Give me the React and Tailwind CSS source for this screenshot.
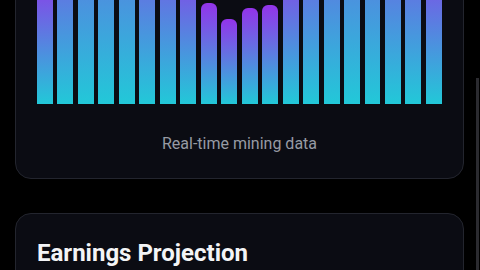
import React from 'react'

// heights in px, chart area is 300px tall
const bars = [133, 207, 280, 296, 296, 207, 188, 150, 100.5, 84.5, 95.5, 98.5, 150, 207, 252, 296, 280, 225, 207, 162]

function MiningChart() {
  return (
    <div className="rounded-2xl border border-[#23252e] bg-[#0b0c13] px-[21px] pt-[24px] pb-[24px]">
      <div className="flex h-[300px] items-end gap-[4.5px]">
        {bars.map((h, i) => (
          <div
            key={i}
            className="flex-1 rounded-t-md bg-[linear-gradient(to_bottom,#9333ea,#22c8d8)]"
            style={{ height: h }}
          />
        ))}
      </div>
      <p className="mt-[30px] text-center text-base leading-[20px] text-[#979ba4]">
        Real-time mining data
      </p>
    </div>
  )
}

function EarningsCard() {
  return (
    <div className="mt-[34px] rounded-2xl border border-[#23252e] bg-[#0b0c13] px-[21px] pt-[23px] pb-6">
      <h2 className="text-2xl leading-8 font-bold text-[#f3f4f6]">Earnings Projection</h2>
      <div className="h-40" />
    </div>
  )
}

export default function App() {
  return (
    <div
      className="relative h-[270px] overflow-hidden bg-black"
      style={{ fontFamily: 'Roboto, "Noto Sans", sans-serif' }}
    >
      <div className="-mt-[221.5px] ml-[15px] mr-[16px]">
        <MiningChart />
        <EarningsCard />
      </div>
      {/* page scrollbar */}
      <div className="absolute top-[78px] right-[1px] bottom-0 w-[3px] bg-[#2b2b30]" />
    </div>
  )
}
